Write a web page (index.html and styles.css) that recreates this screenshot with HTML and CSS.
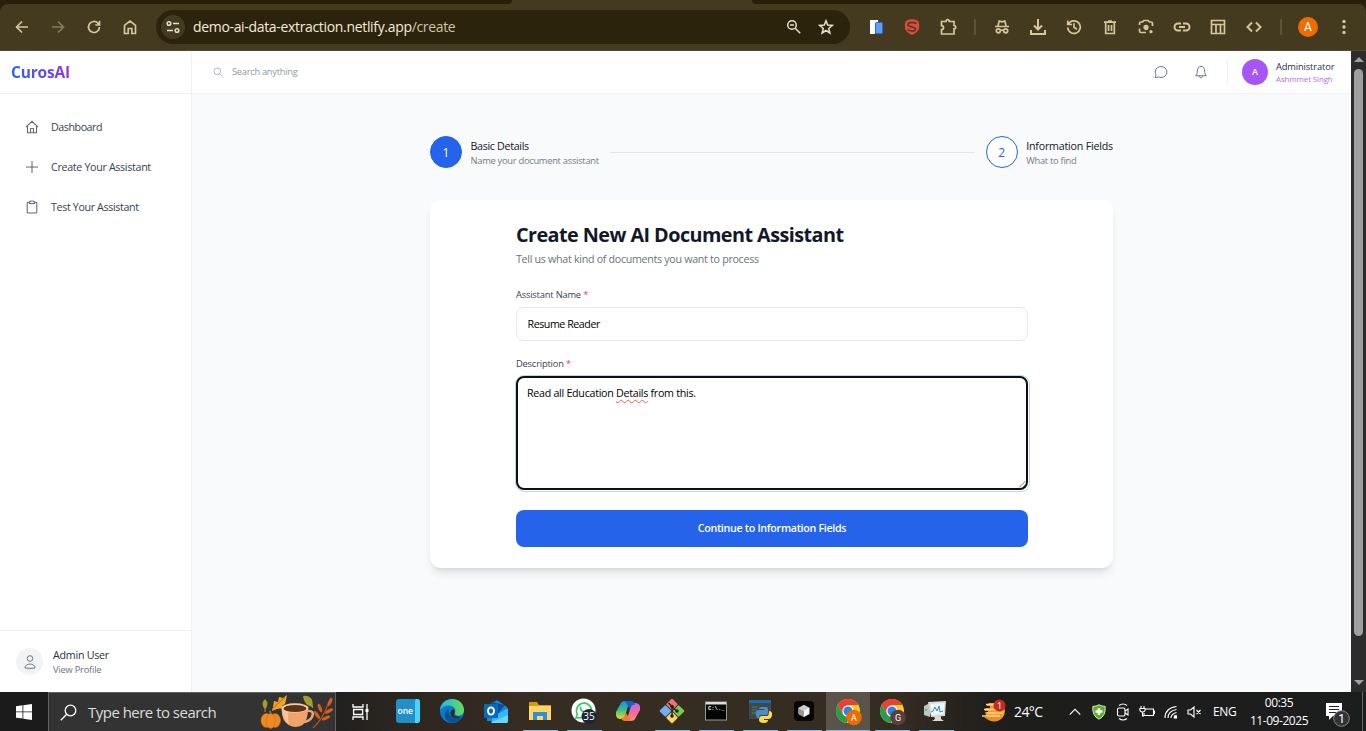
FILE: index.html
```html
<!DOCTYPE html>
<html lang="en">
<head>
<meta charset="utf-8">
<title>CurosAI</title>
<link rel="stylesheet" href="styles.css">
</head>
<body>
<div class="screen">
  <div class="browser">
    <div class="tabstrip"><span class="tab-left"></span><span class="tab-active"></span><span class="tab-right"></span></div>
    <div class="toolbar">
      <span class="tool"><svg width="16" height="16" viewBox="0 0 16 16"><path d="M14 8H3M8 2.5 2.5 8 8 13.500"/></svg></span>
      <span class="tool dim"><svg width="16" height="16" viewBox="0 0 16 16"><path d="M2 8h11M8 2.500 13.500 8 8 13.500"/></svg></span>
      <span class="tool"><svg width="16" height="16" viewBox="0 0 16 16"><path d="M13.500 8A5.500 5.500 0 1 1 11.900 4.100L13.500 5.700M13.500 1.800V6H9.300"/></svg></span>
      <span class="tool"><svg width="16" height="16" viewBox="0 0 16 16"><path d="M2.500 14.500V6.300L8 2l5.500 4.300v8.200H9.800V9.500H6.200v5z"/></svg></span>
      <div class="address">
        <span class="site"><svg width="16" height="16" viewBox="0 0 16 16"><circle cx="4" cy="4.500" r="1.800"/><path d="M8 4.500h6M2 11.500h6"/><circle cx="12" cy="11.500" r="1.800"/></svg></span>
        <span class="url">demo-ai-data-extraction.netlify.app<i>/create</i></span>
        <span class="in-bar"><svg width="16" height="16" viewBox="0 0 16 16"><circle cx="6" cy="6" r="4.300"/><path d="M4 6h4M9.200 9.200l5 5"/></svg></span>
        <span class="in-bar"><svg width="16" height="16" viewBox="0 0 16 16"><path d="m8 1.800 1.700 4.300 4.600.3-3.600 3 1.200 4.600L8 11.500 4.100 14l1.200-4.600-3.600-3 4.600-.3z"/></svg></span>
      </div>
      <span class="tool"><svg width="16" height="16" viewBox="0 0 16 16"><path stroke="none" fill="#fff" d="M2 1h8v3H7v11H2z"/><rect x="7.500" y="3.500" width="7" height="11" rx="1" style="fill:#5c9ff8;stroke:#276cd8;stroke-width:1"/></svg></span>
      <span class="tool"><svg class="brand-s" width="18" height="18" viewBox="0 0 18 18"><path class="shield" d="M3 3C6 .8 12 .8 15 3c1.700 1.800 1.300 5.500.8 8-1 3-4.300 4.900-6.800 6-2.500-1.100-5.800-3-6.800-6C1.700 8.500 1.300 4.800 3 3z"/><path class="ess" d="M13.500 5.600C11 4 5 3.800 5 6.700c0 3 7.600 1.400 7.600 4.200 0 2.400-4.600 2.600-8 1"/></svg></span>
      <span class="tool"><svg width="18" height="18" viewBox="0 0 18 18"><path d="M2.500 3.500H7c0-2.400 3.300-2.400 3.300 0H15v4c2.300 0 2.300 3.300 0 3.300V16H2.500v-4.300c2.700-.3 2.700-3.700 0-4z"/></svg></span>
      <span class="sep"></span>
      <span class="tool"><svg width="16" height="16" viewBox="0 0 16 16"><path d="M1 7.500h14M4 7l1.200-5 2.800.8 2.800-.8L12 7M6.500 11.500q1.500-1 3 0"/><circle cx="4.300" cy="11.800" r="2"/><circle cx="11.700" cy="11.800" r="2"/></svg></span>
      <span class="tool"><svg class="heavy" width="18" height="18" viewBox="0 0 18 18"><path d="M9 1v10M5 7.500l4 4 4-4M2 12v4h14v-4"/></svg></span>
      <span class="tool"><svg width="16" height="16" viewBox="0 0 16 16"><path d="M2.500 5A6.300 6.300 0 1 1 1.700 8.500M1.700 1.500V5.500H6M8 4.300V8.300l3 1.900"/></svg></span>
      <span class="tool"><svg width="16" height="16" viewBox="0 0 16 16"><path d="M2 3.200h12M6 2.200h4M3.700 3.500v11h8.600v-11M6.500 6v6M9.500 6v6"/></svg></span>
      <span class="tool"><svg width="16" height="16" viewBox="0 0 16 16"><path d="M1.500 6V4.500q0-1.500 1.500-1.500h1.500l1.300-1.500h4.400L11.500 3H13q1.500 0 1.500 1.500V7M1.500 9.500V12q0 1.500 1.500 1.500h5"/><circle cx="8" cy="8.500" r="1.800" fill="#d5c69c"/><circle cx="13" cy="12.700" r=".8" fill="#d5c69c"/></svg></span>
      <span class="tool"><svg class="heavy" width="18" height="16" viewBox="0 0 18 16"><path d="M8 4.500H5a3.500 3.500 0 0 0 0 7h3M10 4.500h3a3.500 3.500 0 0 1 0 7h-3M6 8h6"/></svg></span>
      <span class="tool"><svg width="16" height="16" viewBox="0 0 16 16"><path d="M1.500 1.500h13v13h-13zM1.500 5.500h13M6 5.500v9M10.500 5.500v9"/></svg></span>
      <span class="tool"><svg class="heavy" width="18" height="16" viewBox="0 0 18 16"><path d="M7 3.500 2.500 8 7 12.500M11 3.500 15.500 8 11 12.500"/></svg></span>
      <span class="sep"></span>
      <span class="tool"><b class="account">A</b></span>
      <span class="tool"><svg width="4" height="16" viewBox="0 0 4 16"><g fill="#d5c69c" stroke="none"><circle cx="2" cy="2.500" r="1.700"/><circle cx="2" cy="8" r="1.700"/><circle cx="2" cy="13.500" r="1.700"/></g></svg></span>
    </div>
  </div>

  <div class="viewport">
    <aside class="sidebar">
      <div class="brand"><span>CurosAI</span></div>
      <nav class="nav">
        <a><svg width="14" height="14" viewBox="0 0 14 14"><path d="M1 7.200 7 1.300l6 5.900M2.500 6v6.700h9V6M5.500 12.500V9q0-.6.600-.6h1.800q.6 0 .6.600v3.500"/></svg><span class="n1">Dashboard</span></a>
        <a><svg width="14" height="14" viewBox="0 0 14 14"><path d="M7 1v12M1 7h12"/></svg><span class="n2">Create Your Assistant</span></a>
        <a><svg width="14" height="14" viewBox="0 0 14 14"><path d="M4.500 2.200H3.200q-1 0-1 1V12q0 1 1 1h7.600q1 0 1-1V3.200q0-1-1-1H9.500M4.500 3.400V2.200Q4.500 1 7 1t2.500 1.200v1.200z"/></svg><span class="n3">Test Your Assistant</span></a>
      </nav>
      <div class="profile">
        <span class="person"><svg width="14" height="16" viewBox="0 0 14 16"><circle cx="7" cy="4.500" r="2.800"/><path d="M2 14c0-5.300 10-5.300 10 0q-5 .8-10 0z"/></svg></span>
        <div><div class="p-name">Admin User</div><div class="p-link">View Profile</div></div>
      </div>
    </aside>
    <div class="main">
      <header class="topbar">
        <svg class="search-icon" width="10" height="10" viewBox="0 0 10 10"><circle cx="4.300" cy="4.300" r="3.300"/><path d="m6.800 6.800 2.700 2.700"/></svg>
        <span class="search">Search anything</span>
        <span class="round-btn"><svg width="14" height="14" viewBox="0 0 14 14"><path d="M1.300 12.600 2 9.800A5.400 5.400 0 0 1 1.200 7C1.200 3.900 3.800 1.500 7 1.500S12.900 3.900 12.900 7 10.300 12.500 7 12.500q-1.300 0-2.600-.6-1.500 1-3.100.7z"/></svg></span>
        <span class="round-btn"><svg width="14" height="14" viewBox="0 0 14 14"><path d="M1.700 10.800c1.200-1.200 1.600-2.500 1.600-4.800C3.300 3.500 4.700 1.400 7 1.400S10.700 3.500 10.700 6c0 2.300.4 3.600 1.600 4.800zM5.400 10.800c0 2.700 3.200 2.700 3.200 0"/></svg></span>
        <div class="user"><span class="user-badge">A</span><div><div class="u-role">Administrator</div><div class="u-name">Ashmmet Singh</div></div></div>
      </header>
      <div class="content">
        <div class="stepper">
          <span class="num on">1</span>
          <div class="step"><div class="s-title s1">Basic Details</div><div class="s-sub s1s">Name your document assistant</div></div>
          <span class="line"></span>
          <span class="num">2</span>
          <div class="step"><div class="s-title s2">Information Fields</div><div class="s-sub s2s">What to find</div></div>
        </div>
        <section class="card">
          <h1>Create New AI Document Assistant</h1>
          <p class="lead">Tell us what kind of documents you want to process</p>
          <div class="label">Assistant Name <em>*</em></div>
          <div class="input">Resume Reader</div>
          <div class="label">Description <em>*</em></div>
          <div class="ring"><div class="area">Read all Education <u>Details</u> from this.<svg class="grip" width="8" height="8" viewBox="0 0 8 8"><path d="M1 7.500 7.500 1M4.500 7.500l3-3"/></svg></div></div>
          <div class="button">Continue to Information Fields</div>
        </section>
      </div>
    </div>
    <div class="scroll"><i class="up"></i><span class="thumb"></span><i class="down"></i></div>
  </div>

  <div class="taskbar">
    <span class="start"><svg width="16" height="16" viewBox="0 0 16 16"><path fill="#fff" d="M0 2.200 6.500 1.300V7.500H0zM7.300 1.200 16 0v7.500H7.300zM0 8.300h6.500v6.300L0 13.700zM7.300 8.300H16V16l-8.700-1.200z"/></svg></span>
    <div class="find">
      <svg width="17" height="17" viewBox="0 0 17 17"><g fill="none" stroke="#fff" stroke-width="1.300"><circle cx="10.500" cy="6.500" r="5.300"/><path d="M6.700 10.300.8 16.200"/></g></svg>
      <span class="find-text">Type here to search</span>
      <svg class="autumn" width="73" height="36" viewBox="0 0 73 36">
        <path fill="#9aa12c" d="M5 5q-5 5 0 10 5-5 0-10zM43 2q10-2 10 11-9-1-10-11z"/><path stroke="#ca8d25" fill="none" d="M5 8v10M45 3l8 11"/>
        <path fill="#efa32b" d="m13 13 1-6 4 1 1-5 4 1 4-3-1 5-1 4-3 2 1 2-6 1-5 2z"/><path stroke="#b86510" fill="none" d="m12 15 13-12"/>
        <g fill="#ee8a20" stroke="#c8651a" stroke-width=".5"><ellipse cx="6.500" cy="26.500" rx="5.500" ry="7"/><ellipse cx="15" cy="26.500" rx="5.500" ry="7"/><ellipse cx="10.700" cy="27" rx="4.500" ry="7.500"/></g><path stroke="#777d25" stroke-width="2" fill="none" d="m11 20-1-3"/>
        <path fill="none" stroke="#f0a470" stroke-width="2.500" d="M47 17q8-1 5 6-2 4-8 5"/>
        <path fill="#f0a36b" d="M21.500 14q0 13 7 17 7 4 14 0 5.500-4 5.500-17z"/><path fill="#fac79b" d="M22 15q1 11 7 15-2-8 0-13z"/><ellipse cx="35" cy="14" rx="13.500" ry="4.700" fill="#f9cda9"/><ellipse cx="35" cy="14.500" rx="11.500" ry="3.600" fill="#5b3214"/>
        <g fill="#d75d20"><ellipse cx="70" cy="8" rx="1.700" ry="4.500" transform="rotate(25 70 8)"/><ellipse cx="60" cy="14" rx="1.700" ry="4.500" transform="rotate(-20 60 14)"/><ellipse cx="69" cy="17" rx="1.700" ry="4.500" transform="rotate(60 69 17)"/><ellipse cx="57" cy="21" rx="1.700" ry="4.500" transform="rotate(-35 57 21)"/><ellipse cx="66" cy="24" rx="1.700" ry="4.500" transform="rotate(65 66 24)"/></g><path fill="none" stroke="#c04f1b" stroke-width="1.200" d="M53 34q10-9 15-24"/>
      </svg>
    </div>
    <span class="app view"><svg width="18" height="18" viewBox="0 0 18 18"><path fill="none" stroke="#fff" stroke-width="1.300" d="M1 1v3h10V1M1 17v-3h10v3M1.600 6.500h9v5h-9zM15 1v16"/><rect x="13.500" y="6" width="3" height="3" fill="#fff"/></svg></span>
    <span class="app"><svg width="24" height="24" viewBox="0 0 24 24"><rect width="24" height="24" rx="3" fill="#238fc8"/><path fill="#47d5fa" d="M20 0h1q3 0 3 3v18q0 3-3 3h-2V5q0-5 1-5z"/><text x="1.500" y="14.500" class="logo-one">one</text></svg></span>
    <span class="app"><svg width="24" height="24" viewBox="0 0 24 24"><defs><linearGradient id="eg"><stop stop-color="#21b5e9"/><stop offset="1" stop-color="#67dc56"/></linearGradient></defs><circle cx="12" cy="12" r="12" fill="#087cc9"/><path fill="url(#eg)" d="M0 11C1-3 23-4 24 11c0 7-9 7-9 3 3-7-9-11-15-3z"/><path fill="#0b4f9b" d="M9 10c-2 7 4 12 13 8-4 8-15 7-17 0-1-4 1-7 4-8z"/><path fill="#342b21" d="M13 10q3 2 1 5 1 4 8 2-5 4-10 1-4-4 1-8z"/></svg></span>
    <span class="app"><svg width="24" height="24" viewBox="0 0 24 24"><path fill="#1685d4" d="m3 7 10-6 10 7v14H3z"/><path fill="#0a4e9e" d="m7 3 14 3-9 11z"/><path fill="#34b8f3" d="m9 18 15-9v13q0 2-2 2H7z"/><path fill="#62d8fa" d="m8 23 16-7v6q0 2-2 2H8z"/><rect y="5" width="14" height="14" rx="1" fill="#0967c0"/><ellipse cx="7" cy="12" rx="3" ry="3.600" fill="none" stroke="#fff" stroke-width="1.900"/></svg></span>
    <span class="app run"><svg width="24" height="24" viewBox="0 0 24 24"><path fill="#d69713" d="M1 3h8l2 3h12v5H1z"/><path fill="#ffd668" d="M1 7h22v14H1z"/><path fill="#2f8ddd" d="M5 13h14v8h-4v-4H9v4H5z"/></svg></span>
    <span class="app run"><svg width="26" height="26" viewBox="0 0 26 26"><circle cx="12.500" cy="12.500" r="12" fill="#fff"/><path fill="none" stroke="#31c961" stroke-width="1.600" d="m5 20 1.300-4A7.500 7.500 0 1 1 10 19.500z"/><path fill="none" stroke="#31c961" stroke-width="1.700" d="M9.500 8.500q-1 5 6 6"/><circle cx="18" cy="18.500" r="7.500" fill="#202533"/><text x="18" y="22" class="count">35</text></svg></span>
    <span class="app"><svg width="24" height="24" viewBox="0 0 24 24"><defs><linearGradient id="ca" x2="0" y2="1"><stop stop-color="#178be9"/><stop offset=".5" stop-color="#39c184"/><stop offset="1" stop-color="#f2d52a"/></linearGradient><linearGradient id="cb" x2="0" y2="1"><stop stop-color="#b36cf0"/><stop offset=".6" stop-color="#fa6b91"/><stop offset="1" stop-color="#ff9b55"/></linearGradient></defs><path fill="url(#ca)" d="M5 4q1-2 4-2h7q-3 1-4 5L9 17q-1 3-4 3-6 0-5-7z"/><path fill="url(#cb)" d="M19 20q-1 2-4 2H8q3-1 4-5l3-10q1-3 4-3 6 0 5 7z"/><path fill="#165fd0" d="M9 2h6q3 0 4 4-3-1-5 4z"/><path fill="#f47838" d="M15 22H9q-3 0-4-3 3 1 5-5z"/></svg></span>
    <span class="app run"><svg width="26" height="26" viewBox="0 0 26 26"><g transform="rotate(45 13 13)"><rect x="4" y="4" width="8.600" height="8.600" rx="1" fill="#f46f70"/><rect x="13.400" y="4" width="8.600" height="8.600" rx="1" fill="#78c956" transform="translate(0 0)"/><rect x="4" y="13.400" width="8.600" height="8.600" rx="1" fill="#70adf1"/><rect x="13.400" y="13.400" width="8.600" height="8.600" rx="1" fill="#f5d567"/></g><path fill="none" stroke="#26231f" stroke-width="1.500" d="m9.500 5 3.500 3.500V18M13 8.500l4.500 4.500"/><g fill="#26231f"><circle cx="13" cy="8.500" r="1.800"/><circle cx="13" cy="18" r="1.800"/><circle cx="18" cy="13" r="1.800"/></g></svg></span>
    <span class="app run"><svg width="24" height="22" viewBox="0 0 24 22"><rect x="1.500" y="2" width="21" height="18" fill="#050505" stroke="#999"/><path fill="#ddd" d="M2 2h20v2.500H2z"/><text x="4" y="10" class="prompt">C:\._</text></svg></span>
    <span class="app run"><svg width="24" height="24" viewBox="0 0 24 24"><rect x="1" y="1" width="22" height="19" fill="#41484a"/><path fill="#166fae" d="M1 1h22v3H1z"/><path stroke="#498159" d="M4 8h6M4 11h5M4 14h4"/><path fill="#4b8dc4" d="M14 8h4q2 0 2 2v4q0 2-2 2h-5q-2 0-2 3H9q-3-7 1-8h6v-1h-5q0-2 3-2z"/><path fill="#ffd94e" d="M21 12q4 0 3 5-1 3-3 3h-5v1h4q0 3-4 3-5 0-5-3 0-4 3-4h5q2 0 2-5z"/></svg></span>
    <span class="app run"><svg width="20" height="20" viewBox="0 0 20 20"><rect width="20" height="20" rx="4" fill="#050505"/><path fill="#eee" d="m10 4 5.500 3v6L10 16l-5.500-3V7z"/><path fill="#999" d="m4.500 7 5.500 3v6l-5.500-3z"/><path fill="#ccc" d="M4.500 7 10 4l5.500 3L10 10z"/><path fill="#fff" d="M15.500 7 10 10v6z"/></svg></span>
    <span class="app run current"><svg width="27" height="27" viewBox="0 0 27 27"><circle cx="12" cy="12" r="12" fill="#ffcb2f"/><path fill="#e94235" d="M1.600 6A12 12 0 0 1 22.400 6H12L6.800 15z"/><path fill="#279c50" d="M1.600 6 6.800 15a6 6 0 0 0 5.200 3l-1 6A12 12 0 0 1 1.600 6z"/><circle cx="12" cy="12" r="5.700" fill="#fff"/><circle cx="12" cy="12" r="4.500" fill="#347fe5"/><circle cx="18" cy="18.500" r="7.800" fill="#eb6c00"/><text x="18" y="21.800" class="letter">A</text></svg></span>
    <span class="app run"><svg width="27" height="27" viewBox="0 0 27 27"><circle cx="12" cy="12" r="12" fill="#ffcb2f"/><path fill="#e94235" d="M1.600 6A12 12 0 0 1 22.400 6H12L6.800 15z"/><path fill="#279c50" d="M1.600 6 6.800 15a6 6 0 0 0 5.200 3l-1 6A12 12 0 0 1 1.600 6z"/><circle cx="12" cy="12" r="5.700" fill="#fff"/><circle cx="12" cy="12" r="4.500" fill="#347fe5"/><circle cx="18" cy="18.500" r="7.800" fill="#5b403a"/><text x="18" y="21.800" class="letter">G</text></svg></span>
    <span class="app run last"><svg width="24" height="24" viewBox="0 0 24 24"><path fill="#bfc4c2" d="m1 7 6-3v14l-6-2z"/><path fill="#d8dbda" d="m5 3 18-1-1 15-14 1zM11 17h7v3l3 2H9l3-2z"/><path fill="#eef8fc" d="m7.500 5 14-1-1 11-12 1z"/><path fill="none" stroke="#3289bb" d="m8 13 2-1 2-4 2 4 2-5 1 6 3-1"/><circle cx="3" cy="11" r="1" fill="#53a648"/></svg></span>
    <div class="tray">
      <span class="weather"><svg width="26" height="26" viewBox="0 0 26 26"><circle cx="14" cy="12" r="10" fill="#f39b2c"/><path fill="#1d1d1c" d="M3 2h11v2H3zM1 7h8v2H1zM2 12h5v1H2z"/><path stroke="#ffd584" stroke-width="1.500" fill="none" d="M5 5.500h10M3 10.500h13M6 14h16M1 17h18"/><path fill="#ee8d26" d="M3 18h19q-8 9-19 0z"/><circle cx="18.500" cy="6.500" r="6" fill="#c52b21"/><text x="18.500" y="10" class="wx">1</text></svg></span>
      <span class="temp">24°C</span>
      <span class="ti chev"><svg width="12" height="8" viewBox="0 0 12 8"><path d="m.7 6.700 5.300-5.300 5.300 5.300"/></svg></span>
      <span class="ti"><svg width="14" height="16" viewBox="0 0 14 16"><path fill="#58af20" stroke="#d8e3ca" stroke-width="1" d="M7 .8q3 1.600 6.200 1.600Q14 12 7 15.200 0 12 .8 2.400 4 2.400 7 .8z"/><path stroke="#fff" stroke-width="2.600" d="M7 4v7M3.500 7.500h7"/></svg></span>
      <span class="ti"><svg width="14" height="18" viewBox="0 0 14 18"><rect x="1.500" y="5" width="7.500" height="8" rx="1.500"/><path d="m9 8 3-2v6l-3-2M3 2.500q4-3 8 0M3 15.500q4 3 8 0"/></svg></span>
      <span class="ti"><svg width="16" height="14" viewBox="0 0 16 14"><path d="M7 4h7.500v6.500H5V8M14.500 6h1v2.500h-1M2 1v3M5 1v3M.7 3.500h5.600Q6.300 7 3.500 7T.7 3.500M3.500 7v4H5"/></svg></span>
      <span class="ti"><svg width="14" height="14" viewBox="0 0 14 14"><path d="M1 13Q1 3 12.500 1.500M4 13q0-7 8.500-8.500M7 13q0-4 5.500-5.500M10 13q0-2 2.500-2.700"/><rect x="10.500" y="11" width="2" height="2" fill="#fff"/></svg></span>
      <span class="ti vol"><svg width="15" height="14" viewBox="0 0 15 14"><path d="M1 5h2.500L7 2v10L3.500 9H1zM9.500 5l4 4M13.500 5l-4 4"/></svg></span>
      <span class="lang">ENG</span>
      <div class="clock"><div class="time">00:35</div><div class="date">11-09-2025</div></div>
      <span class="notes"><svg width="25" height="27" viewBox="0 0 25 27"><path fill="#fff" d="M0 3h16v13H7l-4 4v-4H0z"/><path stroke="#222" stroke-width="1.200" d="M3 6.500h10M3 9.500h10M3 12.500h7"/><circle cx="15.500" cy="18.500" r="7.800" fill="#333" stroke="#8b8b8b"/><text x="15.500" y="22.600" class="letter big">1</text></svg></span>
      <span class="peek"></span>
    </div>
  </div>
</div>
</body>
</html>
```
FILE: styles.css
```css
* { box-sizing: border-box; }
body { margin: 0; font-family: "Open Sans", "Noto Sans", sans-serif; }
.screen { width: 1366px; height: 731px; overflow: hidden; display: grid; grid-template-rows: 51px 641px 39px; white-space: nowrap; }
svg { display: block; flex: none; }

.browser { background: #2a200a; display: flex; flex-direction: column; }
.tabstrip { height: 4px; display: grid; grid-template-columns: 512px 240px 1fr; background: #433a20; }
.tab-left { background: #2a200a; border-bottom-right-radius: 4px; }
.tab-right { background: #2a200a; border-bottom-left-radius: 4px; }
.toolbar { height: 47px; padding: 0 4px 1px; display: flex; align-items: center; background: #433a20; border-bottom: 1px solid #514a35; border-radius: 8px 8px 0 0; }
.tool { width: 36px; display: grid; place-items: center; }
.tool svg, .in-bar svg, .site svg { fill: none; stroke: #d5c69c; stroke-width: 1.700; }
.tool .heavy { stroke-width: 2; }
.brand-s .shield { fill: #d94b3a; stroke: none; }
.brand-s .ess { stroke: #453b22; stroke-width: 1.500; }
.dim { opacity: .45; }
.address { width: 694px; height: 34px; margin: 0 8px; padding: 0 8px 0 5px; border-radius: 17px; background: #2c230d; display: flex; align-items: center; }
.site { width: 24px; height: 24px; border-radius: 50%; background: #433a20; display: grid; place-items: center; margin-right: 8px; }
.site svg, .in-bar svg { stroke: #e6dfc9; stroke-width: 1.500; }
.url { flex: 1; font-size: 14px; letter-spacing: -.33px; color: #f4ecd6; }
.url i { font-style: normal; color: #cec3a5; }
.in-bar { width: 32px; display: grid; place-items: center; }
.sep { width: 18px; height: 16px; display: flex; justify-content: center; }
.sep::before { content: ""; width: 2px; background: #5e5434; }
.account { width: 20px; height: 20px; border-radius: 50%; background: #ef6c00; color: #fff; font: 12px/20px Roboto, sans-serif; text-align: center; }

.viewport { display: grid; grid-template-columns: 192px 1159px 15px; background: #f9fafc; }
.sidebar { background: #fff; border-right: 1px solid #f0f1f3; display: flex; flex-direction: column; }
.brand { height: 43px; border-bottom: 1px solid #f0f1f3; padding-left: 11px; font-size: 15.500px; font-weight: 700; line-height: 43px; letter-spacing: -.2px; }
.brand span { display: inline-block; background: linear-gradient(90deg, #2563eb, #9333ea); -webkit-background-clip: text; background-clip: text; color: transparent; }
.nav { flex: 1; padding-top: 13px; }
.nav a { height: 40px; padding-left: 25px; display: flex; align-items: center; gap: 12px; font-size: 10.700px; font-weight: 500; color: #374151; }
.nav svg { fill: none; stroke: #5d6778; stroke-width: 1.050; }
.n1 { letter-spacing: -.45px; } .n2 { letter-spacing: -.32px; } .n3 { letter-spacing: -.36px; }
.profile { height: 62px; border-top: 1px solid #f0f1f3; padding-left: 16px; display: flex; align-items: center; gap: 10px; }
.profile > div { padding-top: 2px; }
.person { width: 27px; height: 27px; border-radius: 50%; background: #f1f3f5; display: grid; place-items: center; }
.person svg { fill: none; stroke: #6f7786; }
.p-name { font-size: 10.700px; font-weight: 500; line-height: 15px; letter-spacing: -.25px; color: #273142; }
.p-link { font-size: 9.300px; line-height: 14px; letter-spacing: -.2px; color: #6b7280; }

.main { display: flex; flex-direction: column; }
.topbar { height: 43px; background: #fff; border-bottom: 1px solid #f0f1f3; padding-left: 21px; display: flex; align-items: center; }
.search-icon { fill: none; stroke: #b2b7c0; margin: 0 9px 1px 0; }
.search { flex: 1; padding-bottom: 1px; font-size: 9.300px; letter-spacing: -.27px; color: #9097a3; }
.round-btn { width: 40px; display: grid; place-items: center; }
.round-btn svg { fill: none; stroke: #6b7484; stroke-width: 1; }
.user { width: 124px; height: 26px; margin-left: 6px; padding-left: 14px; border-left: 1px solid #f0f1f3; display: flex; align-items: center; gap: 8px; margin-right: 0; }
.topbar .user { width: 124px; }
.user-badge { width: 26px; height: 26px; border-radius: 50%; background: #a855f7; color: #fff; font-size: 9px; font-weight: 600; line-height: 26px; text-align: center; }
.u-role { font-size: 9.300px; font-weight: 500; line-height: 12px; letter-spacing: -.13px; color: #273142; }
.u-name { font-size: 8px; line-height: 11px; color: #b56bf8; letter-spacing: -.15px; }

.content { padding: 42px 0 0 238px; }
.stepper { width: 683px; height: 32px; display: flex; align-items: center; }
.num { width: 32px; height: 32px; border-radius: 50%; border: 1px solid #2563eb; background: #fff; color: #2563eb; font-size: 12px; font-weight: 500; line-height: 31px; text-align: center; }
.num.on { background: #2563eb; color: #fff; }
.step { margin-left: 8px; padding: 2px 0 0 .5px; }
.s-title { font-size: 10.700px; font-weight: 500; line-height: 15px; color: #111827; }
.s-sub { font-size: 9.300px; line-height: 14px; letter-spacing: -.26px; color: #727a87; }
.line { flex: 1; height: 1px; margin: 0 11px; background: #e2e5e9; }
.s1 { letter-spacing: -.32px; } .s2 { letter-spacing: -.21px; }
.card { width: 683px; height: 368px; margin-top: 32px; padding: 21px 85px 0 86px; border-radius: 11px; background: #fff; box-shadow: 0 7px 10px -2px rgba(0,0,0,.1), 0 3px 4px -3px rgba(0,0,0,.12); }
h1 { margin: 0; font-size: 19.800px; line-height: 28px; letter-spacing: -.55px; color: #111827; }
.lead { margin: 2px 0 19px; font-size: 10.700px; line-height: 17px; letter-spacing: -.3px; color: #6b7280; }
.label { height: 20px; padding-top: 1px; font-size: 9.300px; font-weight: 500; line-height: 14px; letter-spacing: -.18px; color: #374151; }
.label em { color: #ef4444; font-style: normal; }
.input { height: 34px; margin-bottom: 16px; padding: 0 10.500px; border: 1px solid #e5e7eb; border-radius: 8px; font-size: 10.700px; line-height: 32px; letter-spacing: -.46px; color: #000; }
.input + .label { padding-top: 0; }
.ring { width: 515px; height: 117px; margin: -2px 0 0 -1px; padding: 0 1px 1px 0; border: 1px solid #bcd4fa; border-radius: 9px; display: flex; }
.area { position: relative; flex: 1; border: 2px solid #101010; border-radius: 8px; padding: 7px 9px; font-size: 10.700px; line-height: 17px; letter-spacing: -.28px; color: #000; }
.area u { text-decoration: underline wavy #ff5757 .6px; text-underline-offset: 1.500px; }
.grip { position: absolute; right: 0; bottom: 0; stroke: #555; stroke-width: .8; }
.button { height: 37px; margin-top: 18px; border-radius: 8px; background: #2563eb; color: #fff; font-size: 10.700px; font-weight: 600; line-height: 36px; letter-spacing: -.31px; text-align: center; }

.scroll { background: #2c2c2c; display: flex; flex-direction: column; align-items: center; padding-top: 6px; }
.up { border: 5px solid transparent; border-top: 0; border-bottom: 5px solid #9f9f9f; }
.thumb { width: 9px; height: 567px; margin-top: 7px; border-radius: 5px; background: #9f9f9f; }
.down { margin-top: 44px; border: 5px solid transparent; border-bottom: 0; border-top: 5px solid #9f9f9f; }

.taskbar { display: flex; height: 39px; color: #fff; background: linear-gradient(90deg, #1b1b1b 0, #202020 336px, #2c2620 400px, #352c22 520px, #352c22 900px, #28241e 950px, #1d1d1c 1010px, #1c1d1d); }
.start { width: 48px; display: grid; place-items: center; padding-top: 1px; }
.find { width: 288px; border: 1px solid #606060; border-bottom: 0; background: #333; display: flex; align-items: center; padding-left: 11px; }
.find-text { flex: 1; margin-left: 11px; font-size: 15px; letter-spacing: -.52px; color: #ddd; }
.autumn { margin-right: 2px; }
.app { width: 44px; display: grid; place-items: center; padding: 0 0 1px; }
.view { width: 50px; padding: 0 1px 0 0; }
.run { background: linear-gradient(#83bce6, #83bce6) center bottom / 35px 1px no-repeat; }
.current { background: linear-gradient(#83bce6, #83bce6) center bottom / 44px 1px no-repeat, #59534a; }
.current, .current + .app { padding: 1px 0 0 2px; }
.last { padding-right: 2px; }
.tray { flex: 1; margin-left: 23px; display: flex; align-items: center; }
.weather { width: 33px; }
.temp { width: 49px; font-size: 14px; letter-spacing: -.6px; }
.ti { width: 24px; display: grid; place-items: center; }
.ti svg { fill: none; stroke: #fff; stroke-width: 1.100; }
.vol { width: 22px; }
.lang { width: 38px; padding-left: 8px; font-size: 12px; letter-spacing: -.4px; }
.clock { width: 72px; text-align: center; font-size: 12px; line-height: 18px; letter-spacing: -.45px; }
.notes { margin-left: 11px; width: 36px; padding-top: 4px; }
.peek { width: 1px; height: 39px; background: #666; }
.logo-one { font: 600 8.500px "Open Sans", sans-serif; fill: #fff; }
.count { font: 10px "Open Sans", sans-serif; text-anchor: middle; fill: #fff; }
.prompt { font: 700 5.500px "Liberation Mono", monospace; fill: #fff; }
.letter { font: 9px Roboto, sans-serif; text-anchor: middle; fill: #fff; }
.letter.big { font-size: 12px; }
.wx { font: 9px "Open Sans", sans-serif; text-anchor: middle; fill: #fff; }
```
